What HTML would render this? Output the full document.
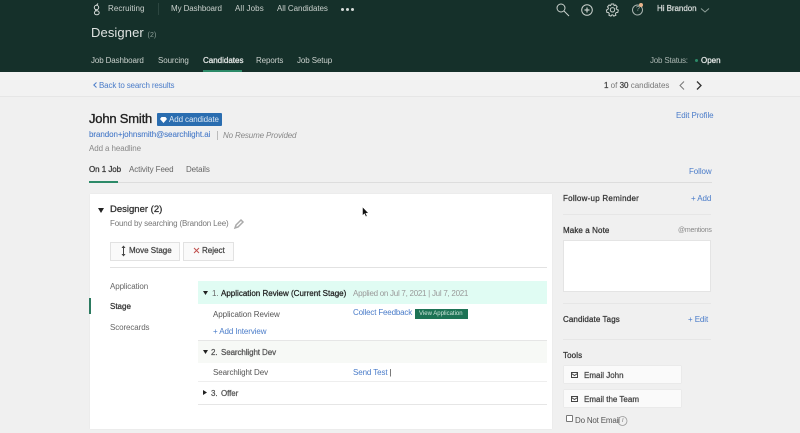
<!DOCTYPE html>
<html><head><meta charset="utf-8"><style>
html,body{margin:0;padding:0}
body{width:800px;height:433px;overflow:hidden;position:relative;background:#f0f0f0;font-family:"Liberation Sans",sans-serif}
.t{position:absolute;white-space:nowrap;font-size:8px;line-height:12px;color:#555;letter-spacing:-.1px}
.b{position:absolute}
.n{color:#c9d0cc}
.l{color:#4a7cc9}
.m{-webkit-text-stroke:.25px}
svg{position:absolute;overflow:visible}
</style></head><body>
<div class="b" style="left:0;top:0;width:800px;height:72px;background:#15302a"></div>
<div class="b" style="left:0;top:72px;width:800px;height:24px;background:#f2f2f2"></div>
<div class="b" style="left:0;top:96px;width:800px;height:1px;background:#e6e6e6"></div>

<svg style="left:93px;top:3px" width="8" height="12" fill="none" stroke="#d5dad8" stroke-width="1"><circle cx="3.500" cy="4.500" r="2.200"/><ellipse cx="3.800" cy="9.800" rx="2.400" ry="2"/><path d="M3.500 2.300L5 .5M2.500 6.500Q2 7.500 3.500 7.800"/></svg>
<div class="t n" style="left:108px;top:3px;letter-spacing:.05px">Recruiting</div>
<div class="b" style="left:158px;top:3px;width:1px;height:12px;background:#2c4640"></div>
<div class="t n" style="left:171px;top:3px">My Dashboard</div>
<div class="t n" style="left:235px;top:3px;letter-spacing:.1px">All Jobs</div>
<div class="t n" style="left:277px;top:3px;letter-spacing:-.05px">All Candidates</div>
<div class="b" style="left:341px;top:8px;width:3px;height:3px;border-radius:50%;background:#d5dad8;box-shadow:5px 0 #d5dad8,10px 0 #d5dad8"></div>

<svg style="left:556px;top:3px" width="14" height="14" fill="none" stroke="#c9d0cc" stroke-width="1"><circle cx="5" cy="5" r="4"/><path d="M8 8l5 5"/></svg>
<svg style="left:581px;top:4px" width="12" height="12" fill="none" stroke="#c9d0cc"><circle cx="6" cy="6" r="5.300"/><path d="M6 3.500v5M3.500 6h5" stroke-width="1.200"/></svg>
<svg style="left:606px;top:3px" width="13" height="13" fill="none" stroke="#c9d0cc"><path d="M5.300 1h2.400l.4 1.600 1.500-.6 1.600 1.900-1 1.300.7 1.300 1.400.6-.5 2.300-1.500.1-.9 1.200.5 1.500-2.100.9-1-1.200H5.900l-1 1.200-2-.9.400-1.500-.9-1.200-1.500-.1L.4 7.100l1.400-.6.700-1.300-1-1.300L3.100 2l1.500.6z"/><circle cx="6.500" cy="6.800" r="2.200"/></svg>
<svg style="left:632px;top:4px" width="12" height="12" fill="none" stroke="#a9b4b0"><circle cx="5.500" cy="6" r="5"/></svg>
<div class="t" style="left:636px;top:4px;color:#a9b4b0;font-size:7px">?</div>
<div class="b" style="left:639px;top:3px;width:4px;height:4px;border-radius:50%;background:#e8b48c"></div>
<div class="t m" style="left:657px;top:3px;color:#d5dad8;letter-spacing:-.05px">Hi Brandon</div>
<svg style="left:701px;top:8px" width="8" height="5" fill="none" stroke="#8fa09a"><path d="M0 .5l4 3.500 4-3.500"/></svg>

<div class="t" style="left:91px;top:24px;font-size:13px;line-height:18px;color:#dfe3e1;letter-spacing:.1px">Designer <span style="font-size:7px;color:#8fa09a">(2)</span></div>

<div class="t n" style="left:91px;top:55px;letter-spacing:-.12px">Job Dashboard</div>
<div class="t n" style="left:158px;top:55px">Sourcing</div>
<div class="t m" style="left:203px;top:55px;color:#e6e9e8;letter-spacing:0">Candidates</div>
<div class="b" style="left:203px;top:70px;width:39px;height:2px;background:#2c8a68"></div>
<div class="t n" style="left:256px;top:55px">Reports</div>
<div class="t n" style="left:297px;top:55px">Job Setup</div>
<div class="t" style="left:650px;top:55px;color:#aab5b1;letter-spacing:-.2px">Job Status:</div>
<div class="b" style="left:695px;top:59px;width:3px;height:3px;border-radius:50%;background:#2c8a68"></div>
<div class="t m" style="left:701px;top:55px;color:#e6e9e8;letter-spacing:0">Open</div>

<svg style="left:93px;top:82px" width="4" height="6" fill="none" stroke="#4a7cc9"><path d="M3.500 .5L.8 3l2.700 2.500"/></svg>
<div class="t l" style="left:99px;top:80px;letter-spacing:-.15px">Back to search results</div>
<div class="t" style="left:604px;top:80px;color:#777;letter-spacing:0"><span class="m" style="color:#444">1</span> of <span class="m" style="color:#444">30</span> candidates</div>
<svg style="left:679px;top:81px" width="6" height="9" fill="none" stroke="#777"><path d="M5 .5L1 4.500 5 8.500"/></svg>
<svg style="left:696px;top:81px" width="6" height="9" fill="none" stroke="#333" stroke-width="1.300"><path d="M1 .5l4 4-4 4"/></svg>

<div class="t" style="left:89px;top:110px;font-size:13px;line-height:18px;color:#222;-webkit-text-stroke:.35px;letter-spacing:-.2px">John Smith</div>
<div class="b" style="left:157px;top:113px;width:65px;height:13px;background:#2a6db0;border-radius:1px"></div>
<svg style="left:160px;top:117px" width="7" height="6" fill="#fff"><path d="M1.500 0h4L7 2 3.500 6 0 2z"/></svg>
<div class="t" style="left:169px;top:114px;color:#dbe7f3">Add candidate</div>
<div class="t" style="left:676px;top:110px;color:#4a7cc9">Edit Profile</div>
<div class="t l m" style="left:89px;top:129px;letter-spacing:-.07px;-webkit-text-stroke:.1px">brandon+johnsmith@searchlight.ai</div>
<div class="b" style="left:217px;top:131px;width:1px;height:9px;background:#bbb"></div>
<div class="t" style="left:223px;top:130px;color:#888;font-style:italic;letter-spacing:-.15px">No Resume Provided</div>
<div class="t" style="left:89px;top:143px;color:#888">Add a headline</div>

<div class="t m" style="left:89px;top:164px;color:#333;letter-spacing:-.05px">On 1 Job</div>
<div class="t" style="left:129px;top:164px;color:#666">Activity Feed</div>
<div class="t" style="left:186px;top:164px;color:#666">Details</div>
<div class="t l" style="left:689px;top:166px">Follow</div>
<div class="b" style="left:89px;top:182px;width:623px;height:1px;background:#ddd"></div>
<div class="b" style="left:89px;top:181px;width:29px;height:2px;background:#2c8a68"></div>

<!-- main card -->
<div class="b" style="left:90px;top:194px;width:462px;height:235px;background:#fff;box-shadow:0 0 1px #ddd"></div>
<svg style="left:98px;top:208px" width="6" height="5" fill="#222"><path d="M0 0h6L3 5z"/></svg>
<div class="t" style="left:110px;top:203px;font-size:9.500px;line-height:13px;color:#333;-webkit-text-stroke:.3px;letter-spacing:0">Designer (2)</div>
<div class="t" style="left:110px;top:218px;color:#777;letter-spacing:-.16px">Found by searching (Brandon Lee)</div>
<svg style="left:234px;top:219px" width="10" height="10" fill="none" stroke="#aaa" stroke-width="1.500"><path d="M1 9l1-3 5-5 2 2-5 5z"/></svg>

<div class="b" style="left:110px;top:242px;width:68px;height:17px;background:#fafafa;border:1px solid #e2e2e2"></div>
<svg style="left:121px;top:245px" width="5" height="12" fill="#444" stroke="#444"><path d="M2.500 1v10" fill="none"/><path d="M.5 3l2-2.500L4.500 3zM.5 9l2 2.500L4.500 9z" stroke="none"/></svg>
<div class="t m" style="left:129px;top:245px;color:#444;letter-spacing:0">Move Stage</div>
<div class="b" style="left:183px;top:242px;width:49px;height:17px;background:#fafafa;border:1px solid #e2e2e2"></div>
<svg style="left:194px;top:248px" width="5" height="5" fill="none" stroke="#c0504d"><path d="M0 0l5 5M5 0L0 5"/></svg>
<div class="t m" style="left:202px;top:245px;color:#444;letter-spacing:0">Reject</div>
<div class="b" style="left:110px;top:267px;width:437px;height:1px;background:#e2e2e2"></div>

<div class="t" style="left:110px;top:281px;color:#666">Application</div>
<div class="t m" style="left:110px;top:301px;color:#333;letter-spacing:0">Stage</div>
<div class="b" style="left:89px;top:298px;width:2px;height:16px;background:#2c7a60"></div>
<div class="t" style="left:110px;top:322px;color:#666">Scorecards</div>

<div class="b" style="left:198px;top:281px;width:349px;height:23px;background:#e0fcf3"></div>
<svg style="left:203px;top:291px" width="5" height="4" fill="#222"><path d="M0 0h5L2.500 4z"/></svg>
<div class="t" style="left:212px;top:288px;color:#666">1.</div>
<div class="t m" style="left:221px;top:288px;color:#222;letter-spacing:.01px">Application Review (Current Stage)</div>
<div class="t" style="left:353px;top:288px;color:#999;letter-spacing:-.27px">Applied on Jul 7, 2021 | Jul 7, 2021</div>

<div class="t" style="left:213px;top:309px;color:#555;letter-spacing:-.05px">Application Review</div>
<div class="t l" style="left:353px;top:307px;letter-spacing:-.17px">Collect Feedback</div>
<div class="b" style="left:415px;top:309px;width:53px;height:10px;background:#1d7355"></div>
<div class="t" style="left:419px;top:308px;font-size:6px;color:#cfe6dc;letter-spacing:0">View Application</div>
<div class="t l" style="left:213px;top:326px">+ Add Interview</div>

<div class="b" style="left:198px;top:340px;width:349px;height:23px;background:#f7f9f6;border-top:1px solid #e6e6e6;box-sizing:border-box"></div>
<svg style="left:203px;top:350px" width="5" height="4" fill="#222"><path d="M0 0h5L2.500 4z"/></svg>
<div class="t m" style="left:211px;top:347px;color:#555">2.</div>
<div class="t m" style="left:221px;top:347px;color:#555">Searchlight Dev</div>
<div class="t" style="left:213px;top:367px;color:#555">Searchlight Dev</div>
<div class="t l" style="left:353px;top:367px">Send Test <span style="color:#333">|</span></div>
<div class="b" style="left:198px;top:381px;width:349px;height:1px;background:#eee"></div>
<svg style="left:203px;top:390px" width="4" height="5" fill="#222"><path d="M0 0l4 2.500L0 5z"/></svg>
<div class="t m" style="left:211px;top:388px;color:#555">3.</div>
<div class="t m" style="left:221px;top:388px;color:#555">Offer</div>
<div class="b" style="left:198px;top:404px;width:349px;height:1px;background:#e6e6e6"></div>

<!-- right column -->
<div class="t m" style="left:563px;top:193px;color:#333;letter-spacing:.25px">Follow-up Reminder</div>
<div class="t l" style="left:691px;top:193px">+ Add</div>
<div class="b" style="left:563px;top:214px;width:148px;height:1px;background:#e6e6e6"></div>
<div class="t m" style="left:563px;top:225px;color:#333;letter-spacing:.1px">Make a Note</div>
<div class="t" style="left:678px;top:225px;color:#888;font-size:7px;letter-spacing:-.2px">@mentions</div>
<div class="b" style="left:563px;top:240px;width:148px;height:52px;background:#fff;border:1px solid #e4e4e4;box-sizing:border-box"></div>
<div class="b" style="left:563px;top:303px;width:148px;height:1px;background:#e6e6e6"></div>
<div class="t m" style="left:563px;top:314px;color:#333;letter-spacing:.1px">Candidate Tags</div>
<div class="t l" style="left:688px;top:314px">+ Edit</div>
<div class="b" style="left:563px;top:339px;width:148px;height:1px;background:#e6e6e6"></div>
<div class="t m" style="left:563px;top:350px;color:#333;letter-spacing:.1px">Tools</div>
<div class="b" style="left:564px;top:366px;width:117px;height:17px;background:#fafafa;box-shadow:0 0 1px #ccc"></div>
<svg style="left:571px;top:372px" width="7" height="6" fill="none" stroke="#444"><rect x=".5" y=".5" width="6" height="5"/><path d="M.5 1.500l3 2 3-2"/></svg>
<div class="t m" style="left:584px;top:370px;color:#444;letter-spacing:0">Email John</div>
<div class="b" style="left:564px;top:390px;width:117px;height:17px;background:#fafafa;box-shadow:0 0 1px #ccc"></div>
<svg style="left:571px;top:396px" width="7" height="6" fill="none" stroke="#444"><rect x=".5" y=".5" width="6" height="5"/><path d="M.5 1.500l3 2 3-2"/></svg>
<div class="t m" style="left:584px;top:394px;color:#444;letter-spacing:0">Email the Team</div>
<div class="b" style="left:566px;top:415px;width:5px;height:5px;background:#fff;border:1px solid #777;border-radius:1px"></div>
<div class="t" style="left:575px;top:415px;color:#555;letter-spacing:-.2px">Do Not Email</div>
<svg style="left:618px;top:416px" width="10" height="10" fill="none" stroke="#999" stroke-width=".8"><circle cx="4.500" cy="5" r="4.500"/></svg>
<div class="t" style="left:622px;top:415px;color:#888;font-style:italic;font-size:7px">i</div>

<svg style="left:362px;top:207px" width="7" height="10"><path d="M.5 0v8.500l2-1.800 1.300 3 1.300-.6-1.300-2.900H6.500z" fill="#111" stroke="#fff" stroke-width=".5"/></svg>
</body></html>
